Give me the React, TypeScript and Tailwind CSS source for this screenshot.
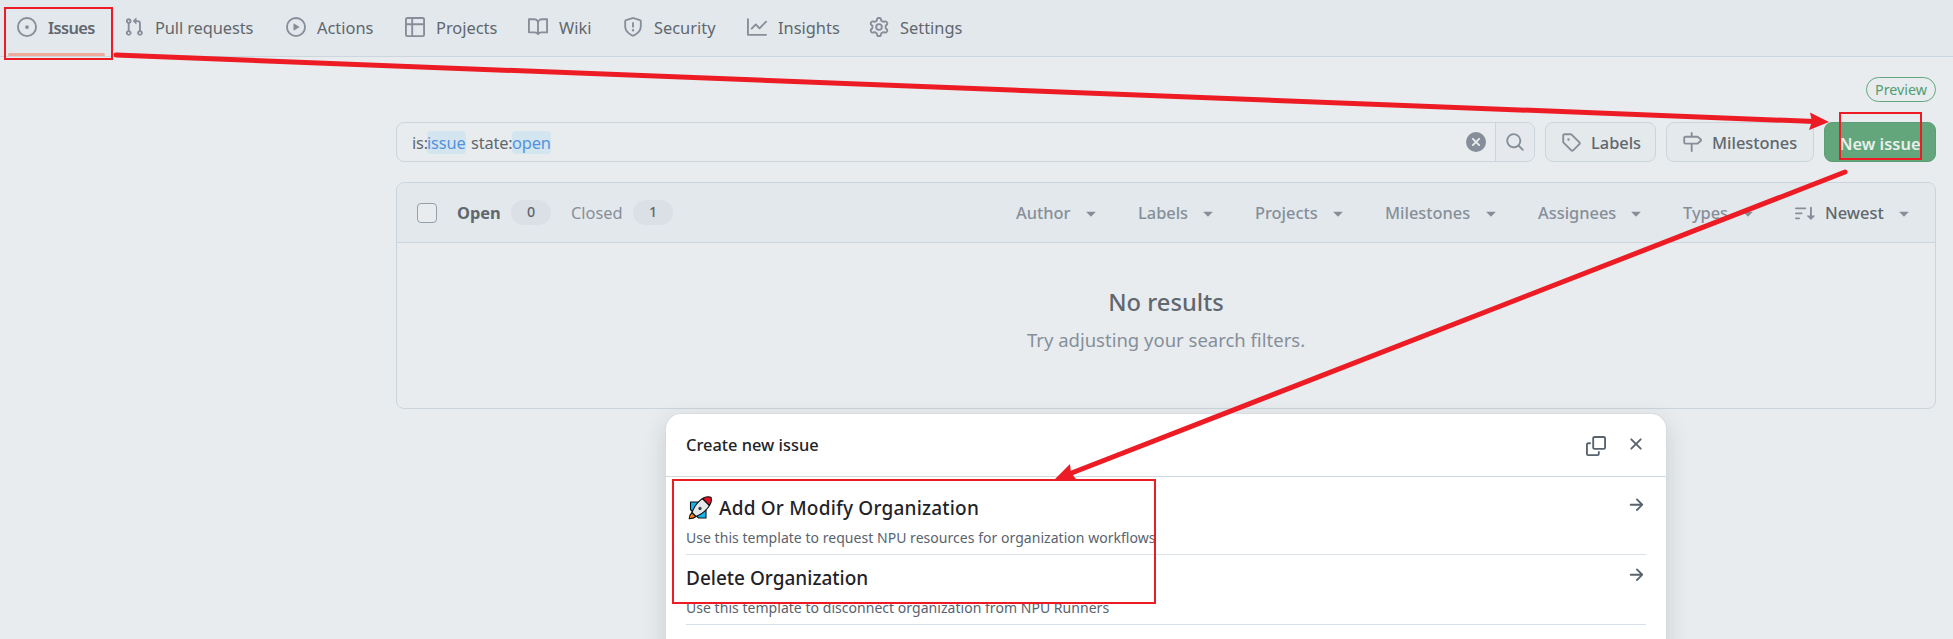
import React from 'react';

const P = {
  issue: 'M8 9.5a1.5 1.5 0 1 0 0-3 1.5 1.5 0 0 0 0 3ZM8 0a8 8 0 1 1 0 16A8 8 0 0 1 8 0ZM1.5 8a6.5 6.5 0 1 0 13 0 6.5 6.5 0 0 0-13 0Z',
  pull: 'M1.5 3.25a2.25 2.25 0 1 1 3 2.122v5.256a2.251 2.251 0 1 1-1.5 0V5.372A2.25 2.25 0 0 1 1.5 3.25Zm5.677-.177L9.573.677A.25.25 0 0 1 10 .854V2.5h1A2.5 2.5 0 0 1 13.5 5v5.628a2.251 2.251 0 1 1-1.5 0V5a1 1 0 0 0-1-1h-1v1.646a.25.25 0 0 1-.427.177L7.177 3.427a.25.25 0 0 1 0-.354ZM3.75 2.5a.75.75 0 1 0 0 1.5.75.75 0 0 0 0-1.5Zm0 9.5a.75.75 0 1 0 0 1.5.75.75 0 0 0 0-1.5Zm8.25.75a.75.75 0 1 0 1.5 0 .75.75 0 0 0-1.5 0Z',
  play: 'M8 0a8 8 0 1 1 0 16A8 8 0 0 1 8 0ZM1.5 8a6.5 6.5 0 1 0 13 0 6.5 6.5 0 0 0-13 0Zm4.879-2.773 4.264 2.559a.25.25 0 0 1 0 .428l-4.264 2.559A.25.25 0 0 1 6 10.559V5.442a.25.25 0 0 1 .379-.215Z',
  table: 'M0 1.75C0 .784.784 0 1.75 0h12.5C15.216 0 16 .784 16 1.75v12.5A1.75 1.75 0 0 1 14.25 16H1.75A1.75 1.75 0 0 1 0 14.25ZM6.5 6.5v8h7.75a.25.25 0 0 0 .25-.25V6.5Zm8-1.5V1.75a.25.25 0 0 0-.25-.25H6.5V5Zm-13 1.5v7.75c0 .138.112.25.25.25H5v-8ZM5 5V1.5H1.75a.25.25 0 0 0-.25.25V5Z',
  book: 'M0 1.75A.75.75 0 0 1 .75 1h4.253c1.227 0 2.317.59 3 1.501A3.743 3.743 0 0 1 11.006 1h4.245a.75.75 0 0 1 .75.75v10.5a.75.75 0 0 1-.75.75h-4.507a2.25 2.25 0 0 0-1.591.659l-.622.621a.75.75 0 0 1-1.06 0l-.622-.621A2.25 2.25 0 0 0 5.258 13H.75a.75.75 0 0 1-.75-.75Zm7.251 10.324.004-5.073-.002-2.253A2.25 2.25 0 0 0 5.003 2.5H1.5v9h3.757a3.75 3.75 0 0 1 1.994.574ZM8.755 4.75l-.004 7.322a3.752 3.752 0 0 1 1.992-.572H14.5v-9h-3.495a2.25 2.25 0 0 0-2.25 2.25Z',
  shield: 'M7.467.133a1.748 1.748 0 0 1 1.066 0l5.25 1.68A1.75 1.75 0 0 1 15 3.48V7c0 1.566-.32 3.182-1.303 4.682-.983 1.498-2.585 2.813-5.032 3.855a1.697 1.697 0 0 1-1.33 0c-2.447-1.042-4.049-2.357-5.032-3.855C1.32 10.182 1 8.566 1 7V3.48a1.755 1.755 0 0 1 1.217-1.667Zm.61 1.429a.25.25 0 0 0-.153 0l-5.25 1.68a.25.25 0 0 0-.174.238V7c0 1.358.275 2.666 1.057 3.86.784 1.194 2.121 2.34 4.366 3.297a.196.196 0 0 0 .154 0c2.245-.956 3.582-2.104 4.366-3.298C13.225 9.666 13.5 8.36 13.5 7V3.48a.251.251 0 0 0-.174-.237l-5.25-1.68ZM8.75 4.75v3a.75.75 0 0 1-1.5 0v-3a.75.75 0 0 1 1.5 0ZM9 10.5a1 1 0 1 1-2 0 1 1 0 0 1 2 0Z',
  graph: 'M1.5 1.75V13.5h13.75a.75.75 0 0 1 0 1.5H.75a.75.75 0 0 1-.75-.75V1.75a.75.75 0 0 1 1.5 0Zm14.28 2.53-5.25 5.25a.75.75 0 0 1-1.06 0L7 7.06 4.28 9.78a.751.751 0 0 1-1.042-.018.751.751 0 0 1-.018-1.042l3.25-3.25a.75.75 0 0 1 1.06 0L10 7.94l4.72-4.72a.751.751 0 0 1 1.042.018.751.751 0 0 1 .018 1.042Z',
  gear: 'M8 0a8.2 8.2 0 0 1 .701.031C9.444.095 9.99.645 10.16 1.29l.288 1.107c.018.066.079.158.212.224.231.114.454.243.668.386.123.082.233.09.299.071l1.103-.303c.644-.176 1.392.021 1.82.63.27.385.506.792.704 1.218.315.675.111 1.422-.364 1.891l-.814.806c-.049.048-.098.147-.088.294.016.257.016.515 0 .772-.01.147.038.246.088.294l.814.806c.475.469.679 1.216.364 1.891a7.977 7.977 0 0 1-.704 1.217c-.428.61-1.176.807-1.82.63l-1.102-.302c-.067-.019-.177-.011-.3.071a5.909 5.909 0 0 1-.668.386c-.133.066-.194.158-.211.224l-.29 1.106c-.168.646-.715 1.196-1.458 1.26a8.006 8.006 0 0 1-1.402 0c-.743-.064-1.289-.614-1.458-1.26l-.289-1.106c-.018-.066-.079-.158-.212-.224a5.738 5.738 0 0 1-.668-.386c-.123-.082-.233-.09-.299-.071l-1.103.303c-.644.176-1.392-.021-1.82-.63a8.12 8.12 0 0 1-.704-1.218c-.315-.675-.111-1.422.363-1.891l.815-.806c.05-.048.098-.147.088-.294a6.214 6.214 0 0 1 0-.772c.01-.147-.038-.246-.088-.294l-.815-.806C.635 6.045.431 5.298.746 4.623a7.92 7.92 0 0 1 .704-1.217c.428-.61 1.176-.807 1.82-.63l1.102.302c.067.019.177.011.3-.071.214-.143.437-.272.668-.386.133-.066.194-.158.211-.224l.29-1.106C6.009.645 6.556.095 7.299.03 7.53.01 7.764 0 8 0Zm-.571 1.525c-.036.003-.108.036-.137.146l-.289 1.105c-.147.561-.549.967-.998 1.189-.173.086-.34.183-.5.29-.417.278-.97.423-1.529.27l-1.103-.303c-.109-.03-.175.016-.195.045-.22.312-.412.644-.573.99-.014.031-.021.11.059.19l.815.806c.411.406.562.957.53 1.456a4.709 4.709 0 0 0 0 .582c.032.499-.119 1.05-.53 1.456l-.815.806c-.081.08-.073.159-.059.19.162.346.353.677.573.989.02.03.085.076.195.046l1.102-.303c.56-.153 1.113-.008 1.53.27.161.107.328.204.501.29.447.222.85.629.997 1.189l.289 1.105c.029.109.101.143.137.146a6.6 6.6 0 0 0 1.142 0c.036-.003.108-.036.137-.146l.289-1.105c.147-.561.549-.967.998-1.189.173-.086.34-.183.5-.29.417-.278.97-.423 1.529-.27l1.103.303c.109.029.175-.016.195-.045.22-.313.411-.644.573-.99.014-.031.021-.11-.059-.19l-.815-.806c-.411-.406-.562-.957-.53-1.456a4.709 4.709 0 0 0 0-.582c-.032-.499.119-1.05.53-1.456l.815-.806c.081-.08.073-.159.059-.19a6.464 6.464 0 0 0-.573-.989c-.02-.03-.085-.076-.195-.046l-1.102.303c-.56.153-1.113.008-1.53-.27a4.44 4.44 0 0 0-.501-.29c-.447-.222-.85-.629-.997-1.189l-.289-1.105c-.029-.11-.101-.143-.137-.146a6.6 6.6 0 0 0-1.142 0ZM11 8a3 3 0 1 1-6 0 3 3 0 0 1 6 0ZM9.5 8a1.5 1.5 0 1 0-3.001.001A1.5 1.5 0 0 0 9.5 8Z',
  tag: 'M1 7.775V2.75C1 1.784 1.784 1 2.75 1h5.025c.464 0 .91.184 1.238.513l6.25 6.25a1.75 1.75 0 0 1 0 2.474l-5.026 5.026a1.75 1.75 0 0 1-2.474 0l-6.25-6.25A1.752 1.752 0 0 1 1 7.775Zm1.5 0c0 .066.026.13.073.177l6.25 6.25a.25.25 0 0 0 .354 0l5.025-5.025a.25.25 0 0 0 0-.354l-6.25-6.25a.25.25 0 0 0-.177-.073H2.75a.25.25 0 0 0-.25.25ZM6 5a1 1 0 1 1 0 2 1 1 0 0 1 0-2Z',
  milestone: 'M7.75 0a.75.75 0 0 1 .75.75V3h3.634c.414 0 .814.147 1.13.414l2.07 1.75a1.75 1.75 0 0 1 0 2.672l-2.07 1.75a1.75 1.75 0 0 1-1.13.414H8.5v5.25a.75.75 0 0 1-1.5 0V10H2.75A1.75 1.75 0 0 1 1 8.25v-3.5C1 3.784 1.784 3 2.75 3H7V.75A.75.75 0 0 1 7.75 0Zm4.384 8.5a.25.25 0 0 0 .161-.06l2.07-1.75a.248.248 0 0 0 0-.38l-2.07-1.75a.25.25 0 0 0-.161-.06H2.75a.25.25 0 0 0-.25.25v3.5c0 .138.112.25.25.25h9.384Z',
  search: 'M10.68 11.74a6 6 0 0 1-7.922-8.982 6 6 0 0 1 8.982 7.922l3.04 3.04a.749.749 0 0 1-.326 1.275.749.749 0 0 1-.734-.215ZM11.5 7a4.499 4.499 0 1 0-8.997 0A4.499 4.499 0 0 0 11.5 7Z',
  clear: 'M2.343 13.657A8 8 0 1 1 13.658 2.343 8 8 0 0 1 2.343 13.657ZM6.03 4.97a.751.751 0 0 0-1.042.018.751.751 0 0 0-.018 1.042L6.94 8 4.97 9.97a.749.749 0 0 0 .326 1.275.749.749 0 0 0 .734-.215L8 9.06l1.97 1.97a.749.749 0 0 0 1.275-.326.749.749 0 0 0-.215-.734L9.06 8l1.97-1.97a.749.749 0 0 0-.326-1.275.749.749 0 0 0-.734.215L8 6.94Z',
  sort: 'M0 4.25a.75.75 0 0 1 .75-.75h7.5a.75.75 0 0 1 0 1.5H.75A.75.75 0 0 1 0 4.25Zm0 4a.75.75 0 0 1 .75-.75h4.5a.75.75 0 0 1 0 1.5H.75A.75.75 0 0 1 0 8.25Zm0 4a.75.75 0 0 1 .75-.75h2.5a.75.75 0 0 1 0 1.5H.75a.75.75 0 0 1-.75-.75ZM13.5 10h2.25a.25.25 0 0 1 .177.427l-3 3a.25.25 0 0 1-.354 0l-3-3A.25.25 0 0 1 9.75 10H12V3.75a.75.75 0 0 1 1.5 0V10Z',
  caret: 'm4.427 7.427 3.396 3.396a.25.25 0 0 0 .354 0l3.396-3.396A.25.25 0 0 0 11.396 7H4.604a.25.25 0 0 0-.177.427Z',
  copy: 'M0 6.75C0 5.784.784 5 1.75 5h1.5a.75.75 0 0 1 0 1.5h-1.5a.25.25 0 0 0-.25.25v7.5c0 .138.112.25.25.25h7.5a.25.25 0 0 0 .25-.25v-1.5a.75.75 0 0 1 1.5 0v1.5A1.75 1.75 0 0 1 9.25 16h-7.5A1.75 1.75 0 0 1 0 14.25ZM5 1.75C5 .784 5.784 0 6.75 0h7.5C15.216 0 16 .784 16 1.75v7.5A1.75 1.75 0 0 1 14.25 11h-7.5A1.75 1.75 0 0 1 5 9.25Zm1.75-.25a.25.25 0 0 0-.25.25v7.5c0 .138.112.25.25.25h7.5a.25.25 0 0 0 .25-.25v-7.5a.25.25 0 0 0-.25-.25Z',
  x: 'M3.72 3.72a.75.75 0 0 1 1.06 0L8 6.94l3.22-3.22a.749.749 0 0 1 1.275.326.749.749 0 0 1-.215.734L9.06 8l3.22 3.22a.749.749 0 0 1-.326 1.275.749.749 0 0 1-.734-.215L8 9.06l-3.22 3.22a.751.751 0 0 1-1.042-.018.751.751 0 0 1-.018-1.042L6.94 8 3.72 4.78a.75.75 0 0 1 0-1.06Z',
  arrow: 'M8.22 2.97a.75.75 0 0 1 1.06 0l4.25 4.25a.75.75 0 0 1 0 1.06l-4.25 4.25a.751.751 0 0 1-1.042-.018.751.751 0 0 1-.018-1.042l2.97-2.97H3.75a.75.75 0 0 1 0-1.5h7.44L8.22 4.03a.75.75 0 0 1 0-1.06Z',
};

function Icon({ d, className = 'text-[#868f99]' }: { d: string; className?: string }) {
  return (
    <svg viewBox="0 0 16 16" className={`block size-5 shrink-0 ${className}`} fill="currentColor" fillRule="evenodd">
      <path d={d} />
    </svg>
  );
}

const tabs = [
  { label: 'Issues', icon: P.issue, cls: 'w-[107px] font-semibold text-[#60676e] tracking-[-0.6px]' },
  { label: 'Pull requests', icon: P.pull, cls: 'w-[162px] tracking-[-0.1px]' },
  { label: 'Actions', icon: P.play, cls: 'w-[119px]' },
  { label: 'Projects', icon: P.table, cls: 'w-[123px]' },
  { label: 'Wiki', icon: P.book, cls: 'w-[95px]' },
  { label: 'Security', icon: P.shield, cls: 'w-[124px]' },
  { label: 'Insights', icon: P.graph, cls: 'w-[122px]' },
  { label: 'Settings', icon: P.gear, cls: 'w-[110px]' },
];

const filters = [
  { label: 'Author', cls: 'w-[122px]', text: 'w-[55px]' },
  { label: 'Labels', cls: 'w-[117px]', text: 'w-[50px]' },
  { label: 'Projects', cls: 'w-[130px]', text: 'w-[63px]' },
  { label: 'Milestones', cls: 'w-[153px]', text: 'w-[86px]' },
  { label: 'Assignees', cls: 'w-[145px]', text: 'w-[78px]' },
  { label: 'Types', cls: 'w-[112px]', text: 'w-[45px]' },
];

function Rocket() {
  return (
    <svg viewBox="0 0 24 24" className="block h-[24px] w-[24px] shrink-0" stroke="#111" strokeWidth="1.1" strokeLinejoin="round">
      <path d="M2.500 6H10L18 14V22H10.500L2.500 13.500Z" fill="#12b5f0" />
      <path d="M4 16.500C2 18.500 1.200 20.500 1.200 22.800 4 22.800 6.500 22 8 20.500Z" fill="#f7821b" />
      <path d="M4 16.500C6 11 10 5.500 14.500 2.500L21.500 9.500C18.500 14 13.500 18.500 8 20.500Z" fill="#e4e8eb" />
      <path d="M14.500 2.500C17 .8 20.500.4 23 1.200 23.800 3.800 23.200 7 21.500 9.500Z" fill="#e81224" />
      <circle cx="12" cy="12.500" r="1.100" fill="#333" stroke="#444" />
    </svg>
  );
}

export default function App() {
  return (
    <div className="relative h-[639px] w-[1953px] overflow-hidden bg-[#e8ecef] font-['Noto_Sans','Segoe_UI',sans-serif] text-[16.4px] leading-[24px] whitespace-nowrap text-[#60676e]">
      <nav className="flex h-[57px] items-start border-b border-[#ccd6de] bg-[#e3e8ec] pt-[15px] pl-[17px]">
        {tabs.map((t) => (
          <div key={t.label} className={`flex h-6 shrink-0 items-center gap-[11px] ${t.cls}`}>
            <Icon d={t.icon} />
            <span className="pt-px">{t.label}</span>
          </div>
        ))}
      </nav>
      <div className="absolute top-[53px] left-2 h-[3px] w-[97px] rounded-full bg-[#eeaa9c]" />

      <main className="flex flex-col pr-[17px] pl-[396px]">
        <div className="mt-5 flex justify-end">
          <span className="flex h-[25px] w-[70px] items-center justify-center rounded-full border border-[#64a77f] text-[14.3px] text-[#529d70]">Preview</span>
        </div>

        <div className="mt-5 flex h-10 gap-[10px]">
          <div className="flex w-[1139px] rounded-lg border border-[#ccd5dc]">
            <div className="flex flex-1 items-center pl-[15px] leading-[23px] tracking-[-0.15px]">
              <span className="w-[15px]">is:</span>
              <span className="w-[39px] rounded bg-[#d3e5ef] text-[#5592dc]">issue</span>
              <span className="w-[46px] pl-[5px]">state:</span>
              <span className="w-[39px] rounded bg-[#d3e5ef] text-[#5592dc]">open</span>
            </div>
            <div className="flex w-[29px] items-center"><Icon d={P.clear} /></div>
            <div className="flex w-[39px] items-center justify-center rounded-r-lg border-l border-[#ccd5dc] bg-[#e5e9ed]"><Icon d={P.search} /></div>
          </div>
          <button className="flex w-[111px] items-center gap-[10px] rounded-lg border border-[#ccd5dc] bg-[#e4e9ec] pl-[15px] font-medium">
            <Icon d={P.tag} />
            <span className="pt-0.5">Labels</span>
          </button>
          <button className="flex w-[148px] items-center gap-[10px] rounded-lg border border-[#ccd5dc] bg-[#e4e9ec] pl-[15px] font-medium">
            <Icon d={P.milestone} />
            <span className="pt-0.5">Milestones</span>
          </button>
          <button className="flex w-[112px] items-center justify-center rounded-lg border border-[#5c9f76] bg-[#63a67b] pt-[3px] font-semibold text-[#e8efec]">New issue</button>
        </div>

        <section className="mt-5 flex h-[227px] flex-col rounded-lg border border-[#ccd5dc]">
          <header className="flex h-[60px] shrink-0 items-center rounded-t-lg border-b border-[#ccd5dc] bg-[#e3e8ec] pl-5">
            <span className="size-5 rounded-[4px] border border-[#969ea8] bg-[#e8ecef]" />
            <span className="ml-5 w-[54px] pt-px font-bold">Open</span>
            <span className="mb-px flex h-[25px] w-10 items-center justify-center rounded-full bg-[#dbe0e6] text-[14.3px] font-medium">0</span>
            <span className="ml-[20px] w-[62px] pt-px text-[#868f99]">Closed</span>
            <span className="mb-px flex h-[25px] w-10 items-center justify-center rounded-full bg-[#dbe0e6] text-[14.3px] font-medium">1</span>
            <div className="ml-[343px] flex font-medium text-[#868f99]">
              {filters.map((f) => (
                <div key={f.label} className={`flex items-center gap-[10px] ${f.cls}`}>
                  <span className={f.text}>{f.label}</span>
                  <Icon d={P.caret} />
                </div>
              ))}
              <div className="flex items-center text-[#60676e]">
                <Icon d={P.sort} />
                <span className="ml-[10px] w-[59px]">Newest</span>
                <Icon d={P.caret} className="ml-[10px] text-[#868f99]" />
              </div>
            </div>
          </header>
          <div className="flex flex-1 flex-col items-center pt-[41px]">
            <h2 className="text-[23.7px] leading-[36px] font-medium">No results</h2>
            <p className="mt-[6px] text-[18.5px] leading-[28px] text-[#868f99]">Try adjusting your search filters.</p>
          </div>
        </section>
      </main>

      <div className="absolute top-[414px] left-[666px] flex h-[300px] w-[1000px] flex-col rounded-t-[15px] bg-white text-[#1f2328] shadow-[0_0_0_1px_rgba(209,217,224,0.6),0_8px_24px_rgba(37,41,46,0.16)]">
        <header className="flex h-[63px] items-start border-b border-[#cfd9e1] pt-5 pr-5 pl-5">
          <h3 className="-mt-px flex-1 font-medium">Create new issue</h3>
          <Icon d={P.copy} className="mt-[2px] text-[#59636e]" />
          <Icon d={P.x} className="ml-5 text-[#59636e]" />
        </header>
        <div className="flex flex-col px-5">
          <div className="flex h-[78px] justify-between border-b border-[#dae0e7] pt-[18px]">
            <div>
              <div className="-mt-px flex items-center text-[19px] leading-[28px] font-medium tracking-[0.2px]">
                <span className="w-[33px] pl-[2px]"><Rocket /></span>
                <span>Add Or Modify Organization</span>
              </div>
              <p className="mt-[6px] text-[14px] leading-[20px] tracking-[0.035px] text-[#59636e]">Use this template to request NPU resources for organization workflows</p>
            </div>
            <Icon d={P.arrow} className="text-[#59636e]" />
          </div>
          <div className="flex h-[70px] justify-between border-b border-[#dae0e7] pt-[10px]">
            <div>
              <div className="-mt-px text-[19px] leading-[28px] font-medium">Delete Organization</div>
              <p className="mt-[6px] text-[14px] leading-[20px] tracking-[0.035px] text-[#59636e]">Use this template to disconnect organization from NPU Runners</p>
            </div>
            <Icon d={P.arrow} className="text-[#59636e]" />
          </div>
        </div>
      </div>

      <svg viewBox="0 0 1953 639" className="pointer-events-none absolute inset-0 h-[639px] w-[1953px]" fill="none" stroke="#ed1c24" strokeWidth="2">
        <rect x="5" y="8" width="107" height="51" />
        <rect x="1840" y="113" width="81" height="46" />
        <rect x="673" y="480" width="482" height="123" />
        <path d="M116 55 1815 121.500M1845 172 1069 474" strokeWidth="5" strokeLinecap="round" />
        <path d="M1829 122 1809 130 1812 121.500 1810 112.500ZM1055 479 1070 464 1071 473 1076 479Z" fill="#ed1c24" stroke="none" />
      </svg>
    </div>
  );
}
